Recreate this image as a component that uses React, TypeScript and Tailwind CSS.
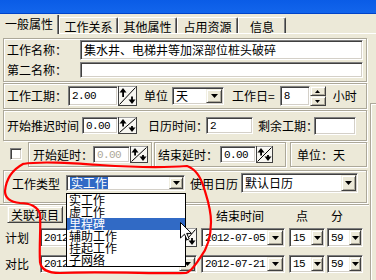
import React from 'react'

const sunken =
  'bg-white border border-t-[#808080] border-l-[#808080] border-b-white border-r-white shadow-[inset_1px_1px_0_#404040,inset_-1px_-1px_0_#D4D0C8]'
const raised =
  'bg-[#ECE9D8] border border-t-[#F1EFE2] border-l-[#F1EFE2] border-b-[#404040] border-r-[#404040] shadow-[inset_1px_1px_0_#fff,inset_-1px_-1px_0_#ACA899]'
const group = 'border border-[#ACA899] shadow-[inset_1px_1px_0_#fff,1px_1px_0_#fff]'
const mono = "font-['Liberation_Mono',monospace] text-[11px] tracking-[-0.6px]"

const Tri: React.FC = () => (
  <svg width="7" height="4" viewBox="0 0 7 4" className="block">
    <path d="M0 0h7L3.5 4z" fill="#000" />
  </svg>
)

// text box, sunken
const Box: React.FC<{ size: string; children?: React.ReactNode; cls?: string }> = ({ size, children, cls = '' }) => (
  <div className={`${sunken} ${size} ${cls} shrink-0 flex items-center pl-[3px] whitespace-nowrap`}>
    {children}
  </div>
)

// combobox with arrow button
const Combo: React.FC<{ size: string; btn: string; children?: React.ReactNode }> = ({ size, btn, children }) => (
  <div className={`${sunken} ${size} shrink-0 flex items-stretch p-px`}>
    <div className="flex-1 flex items-center pl-[2px] whitespace-nowrap">{children}</div>
    <div className={`${raised} ${btn} shrink-0 flex items-center justify-center`}>
      <Tri />
    </div>
  </div>
)

// the up/down arrow box with the diagonal
const SpinBox: React.FC<{ w: number; h: number }> = ({ w, h }) => (
  <svg width={w} height={h} viewBox={`0 0 ${w} ${h}`} className="block shrink-0">
    <rect x="0.5" y="0.5" width={w - 1} height={h - 1} fill="#F7F6F1" stroke="#404040" />
    <path d={`M1 1H${w - 1}`} stroke="#fff" />
    <line x1="1.5" y1={h - 1.5} x2={w - 1.5} y2="1.5" stroke="#000" />
    <path d="M1.5 6.5 L5 2 L8.5 6.5 Z" fill="#000" />
    <rect x="4.2" y="5" width="1.8" height={h / 2 - 4} fill="#000" />
    <path d={`M${w - 8.5} ${h - 6.5} L${w - 5} ${h - 2} L${w - 1.5} ${h - 6.5} Z`} fill="#000" />
    <rect x={w - 5.9} y={h / 2 + 0.5} width="1.8" height={h / 2 - 5} fill="#000" />
  </svg>
)

// small up/down spinner
const SmallSpin: React.FC = () => (
  <div className="flex flex-col w-[16px] h-[20px] shrink-0">
    <div className={`${raised} flex-1 flex items-center justify-center`}>
      <svg width="5" height="3" viewBox="0 0 5 3" className="block">
        <path d="M0 3h5L2.5 0z" fill="#000" />
      </svg>
    </div>
    <div className={`${raised} flex-1 flex items-center justify-center`}>
      <svg width="5" height="3" viewBox="0 0 5 3" className="block">
        <path d="M0 0h5L2.5 3z" fill="#000" />
      </svg>
    </div>
  </div>
)

const tabs = [
  { label: '工作关系', w: 'w-[59px]' },
  { label: '其他属性', w: 'w-[59px]' },
  { label: '占用资源', w: 'w-[61px]' },
  { label: '信息', w: 'w-[48px]' },
]

const workTypes = ['实工作', '虚工作', '里程碑', '辅助工作', '挂起工作', '子网络']

export default function App() {
  return (
    <div className="relative w-[376px] h-[280px] overflow-hidden bg-[#ECE9D8] font-['Noto_Sans_CJK_SC',sans-serif] text-[12px] leading-[12px] text-black">
      {/* Title bar */}
      <div className="h-[14px] bg-gradient-to-b from-[#0A5CE6] to-[#1265EC] border-b border-[#0043C8]" />

      {/* Tabs */}
      <div className="flex items-end h-[20px] border-b border-white">
        <div className="relative z-10 -mb-px h-[19px] w-[59px] bg-[#ECE9D8] border-r border-r-[#404040] shadow-[inset_-1px_0_0_#808080] flex justify-center pt-[3px]">
          一般属性
        </div>
        {tabs.map((t) => (
          <div
            key={t.label}
            className={`${t.w} h-[16px] border-l border-t border-white border-r border-r-[#404040] rounded-tr-[2px] shadow-[inset_-1px_0_0_#808080] flex justify-center pt-[3px]`}
          >
            {t.label}
          </div>
        ))}
      </div>

      {/* Panel */}
      <div className="flex h-[246px]">
        <div className="w-[369px] flex flex-col">
          {/* Names */}
          <div className={`mt-[4px] ml-[3px] w-[364px] h-[44px] ${group} pl-[3px] pt-px flex flex-col`}>
            <div className="flex items-center h-[20px]">
              <span className="w-[73px]">工作名称：</span>
              <Box size="w-[283px] h-[20px]">集水井、电梯井等加深部位桩头破碎</Box>
            </div>
            <div className="flex items-center h-[16px] mt-[2px]">
              <span className="w-[73px]">第二名称：</span>
              <Box size="w-[283px] h-[16px]" />
            </div>
          </div>

          {/* Duration */}
          <div className={`mt-px ml-[3px] w-[364px] h-[26px] ${group} pl-[3px] flex items-center`}>
            <span className="w-[61px]">工作工期：</span>
            <Box size="w-[50px] h-[20px]"><span className={mono}>2.00</span></Box>
            <SpinBox w={19} h={20} />
            <span className="ml-[7px] w-[24px]">单位</span>
            <div className="ml-[4px]">
              <Combo size="w-[52px] h-[18px]" btn="w-[16px]">天</Combo>
            </div>
            <span className="ml-[8px]">工作日=</span>
            <Box size="w-[30px] h-[20px]" cls="ml-[5px]"><span className={mono}>8</span></Box>
            <SmallSpin />
            <span className="ml-[7px]">小时</span>
          </div>

          {/* Delay */}
          <div className={`mt-px ml-[3px] w-[364px] h-[31px] ${group} pl-[3px] flex items-center`}>
            <span className="w-[75px]">开始推迟时间</span>
            <Box size="w-[36px] h-[17px]"><span className={mono}>0.00</span></Box>
            <SpinBox w={19} h={17} />
            <span className="ml-[11px] w-[58px] whitespace-nowrap">日历时间：</span>
            <Box size="w-[47px] h-[17px]"><span className={mono}>2</span></Box>
            <span className="ml-[5px] w-[56px] whitespace-nowrap">剩余工期：</span>
            <Box size="w-[42px] h-[18px]" />
          </div>

          {/* Start / end delay */}
          <div className="mt-px flex h-[26px]">
            <div className={`ml-[10px] mt-[6px] w-[12px] h-[12px] shrink-0 ${sunken}`} />
            <div className={`ml-[6px] w-[124px] h-[25px] ${group} flex items-center pl-[4px]`}>
              <span className="w-[60px] whitespace-nowrap">开始延时：</span>
              <Box size="w-[37px] h-[17px]"><span className={`${mono} text-[#ACA899]`}>0.00</span></Box>
              <SpinBox w={18} h={17} />
            </div>
            <div className={`ml-[2px] w-[132px] h-[25px] ${group} flex items-center pl-[3px]`}>
              <span className="w-[62px] whitespace-nowrap">结束延时：</span>
              <Box size="w-[36px] h-[17px]"><span className={mono}>0.00</span></Box>
              <SpinBox w={17} h={17} />
            </div>
            <div className={`ml-[4px] w-[77px] h-[25px] ${group} flex items-center pl-[6px]`}>单位：天</div>
          </div>

          {/* Work type */}
          <div className={`mt-[2px] ml-[3px] w-[364px] h-[33px] ${group} flex items-start pl-[8px]`}>
            <span className="mt-[7px] w-[48px]">工作类型</span>
            <div className="ml-[6px] mt-[4px]">
              <Combo size="w-[119px] h-[16px]" btn="w-[14px]">
                <span className="bg-[#316AC5] text-white px-px">实工作</span>
              </Combo>
            </div>
            <span className="ml-[5px] mt-[7px] w-[48px]">使用日历</span>
            <div className="ml-[3px] mt-[2px]">
              <Combo size="w-[117px] h-[20px]" btn="w-[15px]">默认日历</Combo>
            </div>
          </div>

          {/* Linked project / times */}
          <div className="mt-px flex-1 border-t border-[#ACA899] shadow-[inset_0_1px_0_#fff] flex flex-col">
            <div className="flex items-end">
              <div className={`ml-[7px] mt-px w-[56px] h-[17px] ${raised} flex items-center justify-center`}>关联项目</div>
              <span className="ml-[153px] mb-px">结束时间</span>
              <span className="ml-[32px] mb-px">点</span>
              <span className="ml-[23px] mb-px">分</span>
            </div>
            <div className="mt-[5px] flex items-center h-[19px]">
              <span className="ml-[5px] w-[35px]">计划</span>
              <Box size="w-[140px] h-[19px]"><span className={mono}>2012</span></Box>
              <SpinBox w={17} h={19} />
              <div className="ml-[4px]">
                <Combo size="w-[84px] h-[19px]" btn="w-[16px]"><span className={mono}>2012-07-05</span></Combo>
              </div>
              <div className="ml-[4px]">
                <Combo size="w-[36px] h-[19px]" btn="w-[12px]"><span className={mono}>15</span></Combo>
              </div>
              <div className="ml-[2px]">
                <Combo size="w-[36px] h-[19px]" btn="w-[12px]"><span className={mono}>59</span></Combo>
              </div>
            </div>
            <div className="mt-[8px] flex items-center h-[18px]">
              <span className="ml-[5px] w-[35px]">对比</span>
              <Combo size="w-[157px] h-[18px]" btn="w-[16px]"><span className={mono}>2012</span></Combo>
              <div className="ml-[4px]">
                <Combo size="w-[84px] h-[18px]" btn="w-[16px]"><span className={mono}>2012-07-21</span></Combo>
              </div>
              <div className="ml-[4px]">
                <Combo size="w-[36px] h-[18px]" btn="w-[12px]"><span className={mono}>15</span></Combo>
              </div>
              <div className="ml-[2px]">
                <Combo size="w-[36px] h-[18px]" btn="w-[12px]"><span className={mono}>59</span></Combo>
              </div>
            </div>
          </div>
        </div>
        <div className="flex-1 mt-[69px] ml-px border-l border-t border-[#ACA899] shadow-[inset_1px_1px_0_#fff]" />
      </div>

      {/* Open dropdown list */}
      <div className="absolute left-[66px] top-[193px] w-[120px] h-[74px] bg-white border border-black z-20">
        {workTypes.map((t, i) => (
          <div
            key={t}
            className={`h-[12px] leading-[12px] pl-[2px] ${i === 2 ? 'bg-[#316AC5] text-white' : ''}`}
          >
            {t}
          </div>
        ))}
      </div>

      {/* Red hand-drawn circle */}
      <svg className="absolute inset-0 z-30 pointer-events-none" width="376" height="280" viewBox="0 0 376 280">
        <path
          d="M23 164 C40 161 70 163 100 165 S160 168 187 166 C196 169 201 178 204 188 C207 198 211 208 211 222 C211 236 208 248 200 258 C195 265 192 271 186 273 C160 274 100 271 60 273 C48 273 41 270 40 262 C39 245 41 228 40 215 C39 207 30 203 20 203 C10 202 5 198 5 191 C6 180 12 170 23 164"
          fill="none"
          stroke="#FF0000"
          strokeWidth="2.2"
          strokeLinecap="round"
          strokeLinejoin="round"
        />
      </svg>

      {/* Mouse pointer */}
      <svg className="absolute left-[180px] top-[222px] z-40" width="12" height="19" viewBox="0 0 12 19">
        <path d="M0.5 0.5 V16 L4.5 12.2 L7 17.8 L9.2 16.9 L6.7 11.4 H11.5 Z" fill="#fff" stroke="#000" strokeWidth="1" />
      </svg>
    </div>
  )
}
